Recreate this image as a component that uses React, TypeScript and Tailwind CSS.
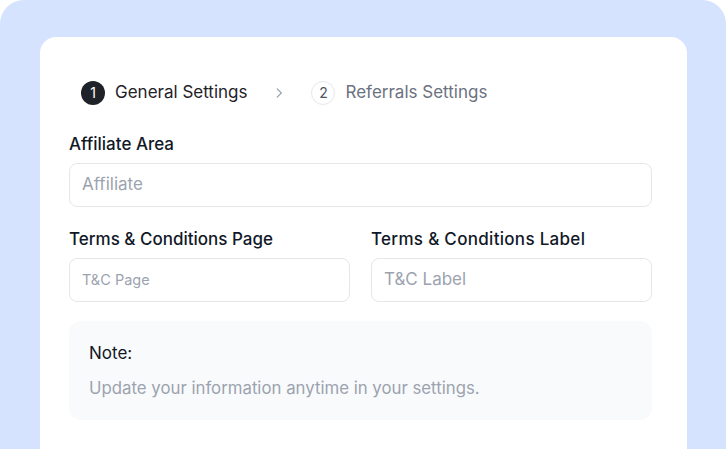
import React from "react";

export default function App() {
  return (
    <div className="w-[726px] h-[449px] bg-white overflow-hidden" style={{ fontFamily: "Inter, 'Noto Sans', sans-serif" }}>
      <div className="w-full h-full bg-[#d5e3fe] rounded-t-[24px] pt-[37px] pl-[40px] pr-[39px]">
        <div className="bg-white rounded-t-[16px] h-[420px] pl-[29px] pr-[35px]">
          <div className="pt-[44px] pl-3 flex items-center h-[67px]">
            <div className="w-6 h-6 rounded-full bg-[#1f2229] text-white text-[14px] flex items-center justify-center">1</div>
            <span className="ml-[10px] text-[17px] text-[#1f2229]">General Settings</span>
            <svg className="ml-[25px]" width="14" height="14" viewBox="0 0 24 24" fill="none" stroke="#9ca3af" strokeWidth="2.2" strokeLinecap="round" strokeLinejoin="round">
              <path d="M9 5l7 7-7 7" />
            </svg>
            <div className="ml-[25px] w-6 h-6 rounded-full border border-[#e5e7eb] text-[#4b5563] text-[14px] flex items-center justify-center">2</div>
            <span className="ml-[10px] text-[17px] text-[#6b7280]">Referrals Settings</span>
          </div>
          <div className="mt-[28px] text-[17px] leading-6 font-medium text-[#111827]">Affiliate Area</div>
          <div className="mt-[7px] h-[44px] rounded-[8px] border border-[#e5e7eb] flex items-center px-3 text-[17px] text-[#9ca3af]">Affiliate</div>
          <div className="mt-[20px] grid grid-cols-2 gap-x-[21px]">
            <div>
              <div className="text-[17px] leading-6 font-medium text-[#111827]">Terms &amp; Conditions Page</div>
              <div className="mt-[7px] h-[44px] rounded-[8px] border border-[#e5e7eb] flex items-center px-3 text-[14.5px] text-[#9ca3af]">T&amp;C Page</div>
            </div>
            <div>
              <div className="text-[17px] leading-6 font-medium text-[#111827] tracking-[0.3px]">Terms &amp; Conditions Label</div>
              <div className="mt-[7px] h-[44px] rounded-[8px] border border-[#e5e7eb] flex items-center px-3 text-[17px] text-[#9ca3af]">T&amp;C Label</div>
            </div>
          </div>
          <div className="mt-[19px] h-[99px] rounded-[12px] bg-[#f9fafc] px-5 pt-5">
            <div className="text-[17px] leading-6 text-[#111827]">Note:</div>
            <div className="mt-[11px] text-[16.8px] leading-6 text-[#9ca3af]">Update your information anytime in your settings.</div>
          </div>
        </div>
      </div>
    </div>
  );
}
